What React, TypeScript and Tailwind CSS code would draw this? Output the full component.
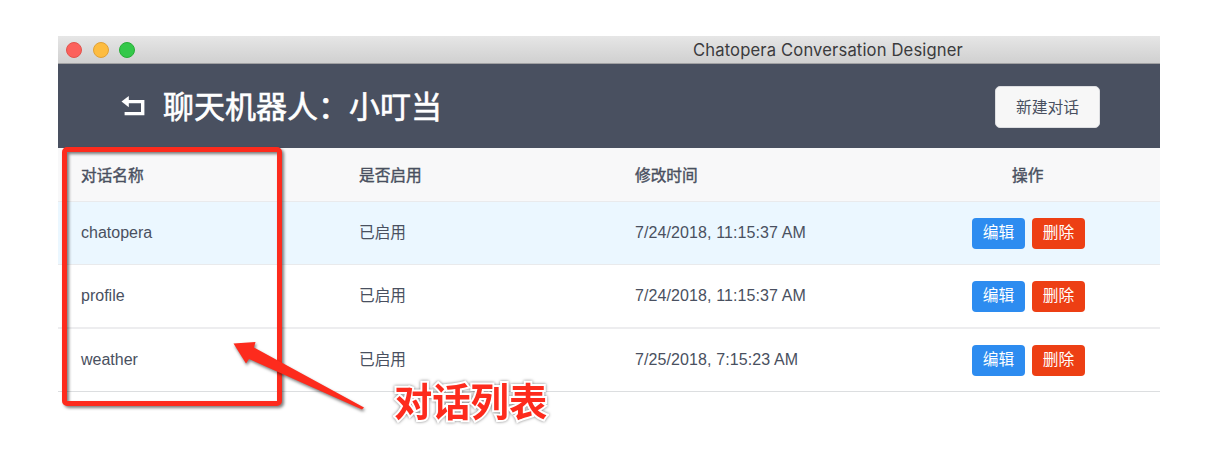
const rows = [
  { name: "chatopera", time: "7/24/2018, 11:15:37 AM", row: "h-[63px] bg-[#ebf7ff] border-[#e9eaec]" },
  { name: "profile", time: "7/24/2018, 11:15:37 AM", row: "h-[64px] bg-white border-[#ededef] border-b-2" },
  { name: "weather", time: "7/25/2018, 7:15:23 AM", row: "h-[63px] bg-white border-[#dcdee0]" },
];

const columns = "grid grid-cols-[278px_276px_283px_265px] items-center";

function BackIcon() {
  return (
    <svg className="h-[20px] w-[24px]" viewBox="0 0 24 20" fill="none">
      <path d="M7 5.6H21.7V17.6H3.6" stroke="white" strokeWidth="3.4" />
      <path d="M0.5 5.6L7.8 0V11.2Z" fill="white" />
    </svg>
  );
}

function Annotation() {
  return (
    <>
      <div className="absolute left-[62px] top-[147px] h-[259px] w-[219.5px] rounded-[5px] border-[5px] border-[#fd2b1d] [filter:drop-shadow(2px_2px_1.5px_rgba(0,0,0,0.5))]" />
      <svg
        className="absolute left-[225px] top-[335px] h-[85px] w-[150px] [filter:drop-shadow(1px_2px_1.5px_rgba(0,0,0,0.5))]"
        viewBox="225 335 150 85"
      >
        <path d="M233.5 343.5L255.5 342L254 347.5L364 407.5L362 409.5L249 359L246 363.5Z" fill="#fd2b1d" />
      </svg>
      <div className="absolute left-[394px] top-[377px] whitespace-nowrap text-[38.3px] leading-[52px] font-bold text-[#fd2b1d] [-webkit-text-stroke:4px_white] [paint-order:stroke_fill] [filter:drop-shadow(0_0_1.5px_rgba(0,0,0,0.5))]">
        对话列表
      </div>
    </>
  );
}

export default function App() {
  return (
    <div className="relative h-[464px] w-[1228px] overflow-hidden bg-white pt-9 pl-[58px] font-['Liberation_Sans','Noto_Sans_CJK_SC',sans-serif] text-[#495060]">
      <div className="w-[1102px]">
        <div className="flex h-7 items-center border-b border-[#a0a0a2] bg-linear-to-b from-[#e6e6e6] to-[#d0d0d0] pl-2">
          <div className="flex gap-[10.5px]">
            <span className="size-4 rounded-full border border-[#e2544d] bg-[#fc615c]" />
            <span className="size-4 rounded-full border border-[#e0a136] bg-[#fdbc40]" />
            <span className="size-4 rounded-full border border-[#27ae36] bg-[#34c84a]" />
          </div>
          <div className="ml-[558px] pt-[2px] whitespace-nowrap font-['Inter',sans-serif] text-[16.6px] leading-none tracking-[0.15px] text-[#3b3b3d]">
            Chatopera Conversation Designer
          </div>
        </div>
        <header className="flex h-[84px] items-center justify-between bg-[#495060] pr-[60px] pl-[63px]">
          <div className="flex items-center gap-[18px] text-white">
            <BackIcon />
            <h1 className="pt-[2px] text-[31px] leading-none font-normal [-webkit-text-stroke:0.6px_white]">聊天机器人：小叮当</h1>
          </div>
          <button className="mt-[2px] h-[42px] w-[105px] rounded-[5px] border border-[#dddee1] bg-[#f7f7f7] pt-[2px] text-[15.8px]">
            新建对话
          </button>
        </header>
        <div className={`${columns} h-[54px] border-b border-[#e9eaec] bg-[#f8f8f9] pt-[2px] text-[15.7px] [-webkit-text-stroke:0.4px_#495060]`}>
          <span className="pl-[23px]">对话名称</span>
          <span className="pl-[23px]">是否启用</span>
          <span className="pl-[23px]">修改时间</span>
          <span className="pl-[117px]">操作</span>
        </div>
        {rows.map((r) => (
          <div key={r.name} className={`${columns} border-b text-[15.7px] ${r.row}`}>
            <span className="pl-[23px] text-[16px]">{r.name}</span>
            <span className="pl-[23px]">已启用</span>
            <span className="pl-[23px] text-[16px] tracking-[0.1px]">{r.time}</span>
            <div className="flex gap-[7px] pl-[77px] text-white">
              <button className="h-[31px] w-[53px] rounded-[4px] bg-[#2d8cf0]">编辑</button>
              <button className="h-[31px] w-[53px] rounded-[4px] bg-[#ed3f14]">删除</button>
            </div>
          </div>
        ))}
      </div>
      <Annotation />
    </div>
  );
}
